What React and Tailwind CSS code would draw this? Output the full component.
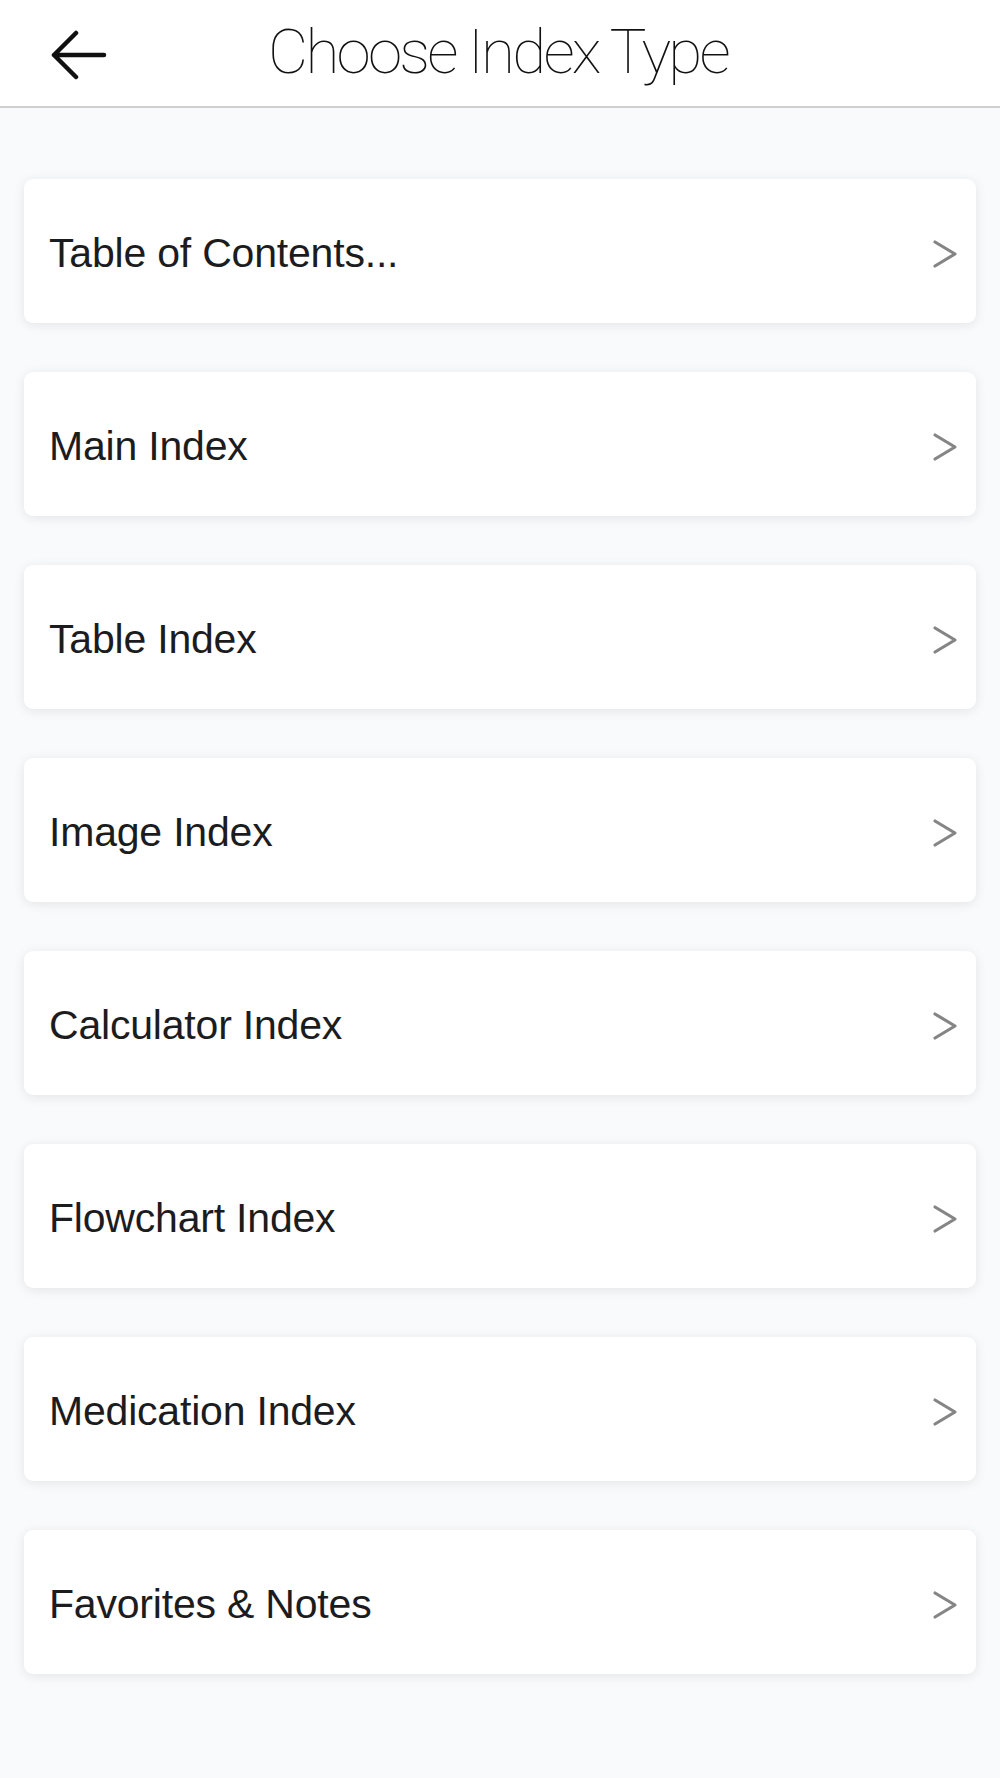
const items = [
  "Table of Contents...",
  "Main Index",
  "Table Index",
  "Image Index",
  "Calculator Index",
  "Flowchart Index",
  "Medication Index",
  "Favorites & Notes",
];

function Chevron() {
  return (
    <svg width="26" height="30" viewBox="0 0 26 30" fill="none">
      <path d="M3 3 L23 15 L3 27" stroke="#858585" strokeWidth="3.2" strokeLinecap="round" strokeLinejoin="round" />
    </svg>
  );
}

export default function App() {
  return (
    <div className="w-[1000px] h-[1778px] bg-[#f9fafc] font-['Liberation_Sans',Arial,sans-serif]">
      <header className="h-[108px] bg-white border-b-[2px] border-[#cfcfcf] flex items-center relative">
        <button className="absolute left-[50px] top-[30px] w-[58px] h-[50px] flex items-center justify-center">
          <svg width="58" height="50" viewBox="0 0 58 50" fill="none">
            <path d="M4 25 H54 M26 3 L4 25 L26 47" stroke="#111" strokeWidth="4.5" strokeLinecap="round" strokeLinejoin="round" />
          </svg>
        </button>
        <h1 className="w-full text-center text-[62px] leading-none font-thin tracking-[-2.8px] text-[#111] font-['Roboto',sans-serif] -mt-[2px] pr-[4px]">
          Choose Index Type
        </h1>
      </header>

      <main className="px-[24px] pt-[71px] flex flex-col gap-[49px]">
        {items.map((label) => (
          <div
            key={label}
            className="h-[144px] bg-white rounded-[9px] shadow-[0_2px_12px_rgba(0,0,0,0.09)] flex items-center justify-between pl-[25px] pr-[18px]"
          >
            <span className="text-[41px] text-[#1c1c1e] tracking-[-0.2px] pt-[6px]">{label}</span>
            <span className="pt-[6px]">
              <Chevron />
            </span>
          </div>
        ))}
      </main>
    </div>
  );
}
